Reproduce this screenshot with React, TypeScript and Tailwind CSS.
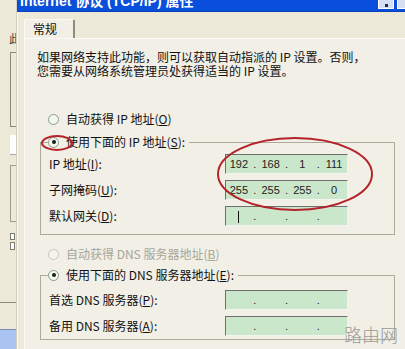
import React from "react";

const cjk = "font-['SimSun','Noto_Sans_CJK_SC',sans-serif]";

function Radio({ checked, disabled }: { checked?: boolean; disabled?: boolean }) {
  return (
    <span
      className={`w-[11px] h-[11px] rounded-full border flex items-center justify-center shrink-0 ${
        disabled ? "border-[#c9c7bc] bg-[#f4f3ee]" : "border-[#8b9a8b] bg-[#f2f8ef]"
      }`}
    >
      {checked && <span className="w-[4px] h-[4px] rounded-full bg-[#1a1a1a]" />}
    </span>
  );
}

function Key({ k }: { k: string }) {
  return <span className="underline underline-offset-1">{k}</span>;
}

function IpBox({ parts, cursor }: { parts: string[]; cursor?: boolean }) {
  return (
    <div className="w-[123px] h-[20px] bg-[#cbe7cb] border-t border-l border-[#6f6f6f] border-b border-r border-b-[#f4f4ee] border-r-[#f4f4ee] flex items-center text-[11px] font-['Liberation_Sans',sans-serif] text-[#222]">
      {parts.map((p, i) => (
        <React.Fragment key={i}>
          <span className="w-[26px] text-center">
            {i === 0 && cursor ? <span className="inline-block w-[1px] h-[12px] bg-[#111] align-middle" /> : p}
          </span>
          {i < 3 && <span className="w-[6px] text-center">.</span>}
        </React.Fragment>
      ))}
    </div>
  );
}

function Row({ label, children }: { label: React.ReactNode; children: React.ReactNode }) {
  return (
    <div className="flex items-center h-[20px]">
      <span className="w-[176px]">{label}</span>
      {children}
    </div>
  );
}

function LeftStrip() {
  return (
    <div className="w-[17px] shrink-0 flex flex-col border-r border-[#d2cfc2] overflow-hidden">
      <div className="ml-[9px] mt-[32px] h-[12px] text-[11px] leading-[12px] text-[#333] overflow-hidden">此</div>
      <div className="ml-[10px] mt-[8px] h-[75px] border-l border-t border-b border-[#8a8a80]" />
      <div className="ml-[10px] mt-[8px] h-[20px] bg-white border-b border-[#a9a89c]" />
      <div className="ml-[10px] mt-[10px] h-[57px] border-l border-t border-b border-[#9d9c92]" />
      <div className="ml-[10px] mt-[11px] w-[5px] h-[7px] border border-[#7a7a72] bg-white" />
      <div className="ml-[10px] mt-[2px] w-[5px] h-[8px] border border-[#7a7a72] bg-white" />
      <div className="mt-[52px] h-[1px] bg-[#8a8a80]" />
      <div className="mt-[26px] flex-1 bg-[#a9c4f0] border-t border-[#7a8fb5]" />
    </div>
  );
}

export default function App() {
  return (
    <div className={`relative w-[405px] h-[349px] overflow-hidden flex bg-[#ece9d8] text-[12px] leading-[14px] text-[#111] ${cjk}`}>
      <LeftStrip />
      <div className="flex-1 flex flex-col">
        <div className="h-[12px] bg-[#0a4fdc] flex items-start overflow-hidden border-b border-[#0840b8]">
          <span className="ml-[3px] mt-[-6px] text-[14px] leading-[14px] font-bold text-white font-['Liberation_Sans','Noto_Sans_CJK_SC',sans-serif] whitespace-nowrap">
            Internet 协议 (TCP/IP) 属性
          </span>
          <span className="ml-auto mr-[3px] w-[16px] h-[9px] bg-[#d6dff2] border border-t-0 border-white flex items-end justify-center">
            <span className="w-[3px] h-[3px] bg-[#1b2b55] mb-[1px]" />
          </span>
          <span className="w-[8px] h-[9px] bg-[#d6dff2] border border-t-0 border-r-0 border-white" />
        </div>
        <div className="flex-1 flex flex-col pl-[6px] pt-[7px] border-l border-[#f8f7f2]">
          <div className="w-[51px] h-[19px] flex items-center pl-[8px] bg-[#f1efe6] border-t border-l border-[#fbfbf7] border-r-2 border-r-[#8e8c80] rounded-t-[2px]">
            常规
          </div>
          <div className="flex-1 flex flex-col bg-[#f1efe6] border-t border-l border-[#fbfbf7] pl-[12px] pt-[11px]">
            <div className="flex flex-col">
              <span className="h-[14px] leading-[14px] whitespace-nowrap">如果网络支持此功能，则可以获取自动指派的 IP 设置。否则，</span>
              <span className="h-[14px] leading-[14px] whitespace-nowrap">您需要从网络系统管理员处获得适当的 IP 设置。</span>
            </div>

            <div className="mt-[33px] ml-[11px] h-[16px] flex items-center gap-[7px]">
              <Radio />
              <span>自动获得 IP 地址(<Key k="O" />)</span>
            </div>

            <fieldset className="mt-[7px] ml-[3px] w-[355px] border border-[#aeab9d] pl-[8px] pt-[4px] pb-[8px] flex flex-col gap-[6px]">
              <legend className="h-[16px] flex items-center gap-[7px] pr-[4px] -ml-[1px]">
                <Radio checked />
                <span>使用下面的 IP 地址(<Key k="S" />):</span>
              </legend>
              <Row label={<>IP 地址(<Key k="I" />):</>}>
                <IpBox parts={["192", "168", "1", "111"]} />
              </Row>
              <Row label={<>子网掩码(<Key k="U" />):</>}>
                <IpBox parts={["255", "255", "255", "0"]} />
              </Row>
              <Row label={<>默认网关(<Key k="D" />):</>}>
                <IpBox parts={["", "", "", ""]} cursor />
              </Row>
            </fieldset>

            <div className="mt-[11px] ml-[11px] h-[16px] flex items-center gap-[7px] text-[#a8a699]">
              <Radio disabled />
              <span>自动获得 DNS 服务器地址(<Key k="B" />)</span>
            </div>

            <fieldset className="mt-[5px] ml-[3px] w-[355px] border border-[#aeab9d] pl-[8px] pt-[7px] pb-[3px] flex flex-col gap-[6px]">
              <legend className="h-[16px] flex items-center gap-[7px] pr-[4px] -ml-[1px]">
                <Radio checked />
                <span>使用下面的 DNS 服务器地址(<Key k="E" />):</span>
              </legend>
              <Row label={<>首选 DNS 服务器(<Key k="P" />):</>}>
                <IpBox parts={["", "", "", ""]} />
              </Row>
              <Row label={<>备用 DNS 服务器(<Key k="A" />):</>}>
                <IpBox parts={["", "", "", ""]} />
              </Row>
            </fieldset>
          </div>
        </div>
      </div>

      <svg className="absolute inset-0 pointer-events-none" width="405" height="349">
        <ellipse cx="57" cy="143" rx="15" ry="7" fill="none" stroke="#b5232a" strokeWidth="2" />
        <ellipse cx="295" cy="174" rx="77" ry="36" fill="none" stroke="#b5232a" strokeWidth="2" />
      </svg>

      <span className="absolute left-[344px] top-[323px] text-[18px] leading-[22px] text-[#9a9a98] font-['Noto_Sans_CJK_SC',sans-serif] font-light">
        路由网
      </span>
    </div>
  );
}
